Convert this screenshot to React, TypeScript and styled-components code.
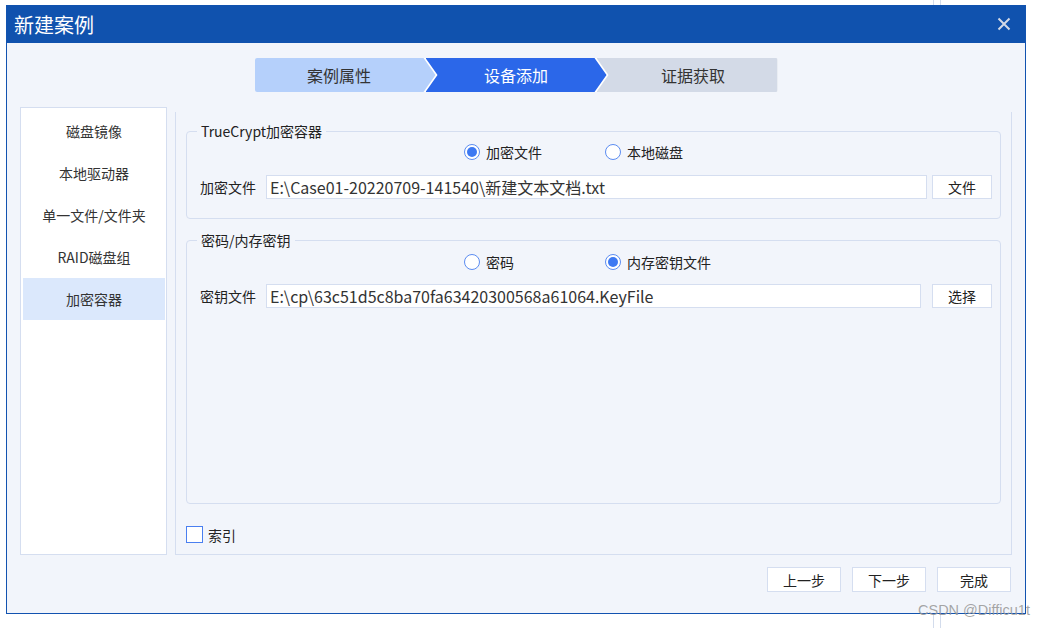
import React from 'react';
import styled, { createGlobalStyle } from 'styled-components';

const GlobalStyle = createGlobalStyle`
  html, body {
    margin: 0;
    padding: 0;
    background: #fff;
  }
  body {
    font-family: "Noto Sans CJK SC", "Noto Sans", sans-serif;
    color: #333;
    overflow: hidden;
  }
`;

const Page = styled.div`
  position: relative;
  width: 1045px;
  height: 628px;
  padding: 5px 0 0 6px;
  box-sizing: border-box;
`;

const BackLine = styled.div<{ $x: number; $top: boolean }>`
  position: absolute;
  left: ${p => p.$x}px;
  ${p => (p.$top ? 'top: 0; height: 5px;' : 'top: 614px; height: 14px;')}
  width: 1px;
  background: #d3dcec;
`;

const Window = styled.div`
  width: 1020px;
  height: 609px;
  box-sizing: border-box;
  border: 1px solid #1253b0;
  border-top: none;
  background: #f2f5fb;
  display: flex;
  flex-direction: column;
`;

const TitleBar = styled.div`
  height: 38px;
  background: #1052ae;
  display: flex;
  align-items: center;
  justify-content: space-between;
  padding: 0 14px 0 7px;
  color: #fff;
  font-size: 20px;
`;

const CloseButton = styled.button`
  border: none;
  background: none;
  padding: 0;
  width: 14px;
  height: 14px;
  display: flex;
  cursor: pointer;
`;

const Body = styled.div`
  flex: 1;
  display: flex;
  flex-direction: column;
  padding: 15px 13px 0 13px;
`;

const Steps = styled.div`
  align-self: center;
  width: 523px;
  height: 34px;
  display: flex;
  background: #fff;
  border-radius: 2px;
  overflow: hidden;
`;

type Tone = 'done' | 'active' | 'todo';

const toneBg: Record<Tone, string> = {
  done: '#b5d0fb',
  active: '#2b67e9',
  todo: '#d3dae7',
};

const Step = styled.div<{ $tone: Tone; $first?: boolean; $last?: boolean }>`
  flex: 0 0 181px;
  box-sizing: border-box;
  margin-left: ${p => (p.$first ? 0 : -10)}px;
  padding-left: ${p => (p.$first ? 0 : 12)}px;
  padding-right: ${p => (p.$last ? 0 : 12)}px;
  display: flex;
  align-items: center;
  justify-content: center;
  font-size: 16px;
  background: ${p => toneBg[p.$tone]};
  color: ${p => (p.$tone === 'active' ? '#fff' : '#333')};
  clip-path: ${p =>
    p.$first
      ? 'polygon(0 0, calc(100% - 12px) 0, 100% 50%, calc(100% - 12px) 100%, 0 100%)'
      : p.$last
      ? 'polygon(0 0, 100% 0, 100% 100%, 0 100%, 12px 50%)'
      : 'polygon(0 0, calc(100% - 12px) 0, 100% 50%, calc(100% - 12px) 100%, 0 100%, 12px 50%)'};
`;

const Main = styled.div`
  margin-top: 15px;
  height: 448px;
  display: flex;
  gap: 8px;
`;

const Sidebar = styled.div`
  width: 147px;
  box-sizing: border-box;
  background: #fff;
  border: 1px solid #d5def0;
  padding: 2px 1px 0 2px;
  display: flex;
  flex-direction: column;
`;

const NavItem = styled.div<{ $active?: boolean }>`
  height: 42px;
  display: flex;
  align-items: center;
  justify-content: center;
  font-size: 14px;
  color: #333;
  background: ${p => (p.$active ? '#dbe8fc' : 'transparent')};
`;

const Panel = styled.div`
  flex: 1;
  margin-top: 5px;
  box-sizing: border-box;
  border: 1px solid #d5def0;
  border-top: none;
  padding: 9px 10px 11px 10px;
  display: flex;
  flex-direction: column;
`;

const Group = styled.fieldset<{ $grow?: boolean; $top?: number }>`
  margin: ${p => p.$top ?? 0}px 0 0 0;
  padding: 0 8px 19px 13px;
  border: 1px solid #d5def0;
  border-radius: 4px;
  min-width: 0;
  ${p => (p.$grow ? 'flex: 1;' : '')}
`;

const Legend = styled.legend`
  margin-left: -3px;
  padding: 0 4px;
  font-size: 14px;
  line-height: 20px;
  color: #222;
`;

const RadioRow = styled.div<{ $top: number }>`
  display: flex;
  margin-top: ${p => p.$top}px;
  padding-left: 264px;
  height: 20px;
`;

const RadioItem = styled.label`
  width: 141px;
  display: flex;
  align-items: center;
  gap: 6px;
  font-size: 14px;
  color: #222;
`;

const RadioCircle = styled.span<{ $checked?: boolean }>`
  width: 16px;
  height: 16px;
  box-sizing: border-box;
  border-radius: 50%;
  border: 1px solid #5b8cf1;
  background: #fff;
  display: inline-flex;
  align-items: center;
  justify-content: center;
  &::after {
    content: '';
    width: 10px;
    height: 10px;
    border-radius: 50%;
    background: #3d79f2;
    display: ${p => (p.$checked ? 'block' : 'none')};
  }
`;

const FieldRow = styled.div<{ $top: number }>`
  display: flex;
  align-items: center;
  margin-top: ${p => p.$top}px;
`;

const FieldLabel = styled.span`
  font-size: 14px;
  color: #222;
  width: 66px;
  flex: none;
`;

const TextInput = styled.input`
  flex: 1;
  min-width: 0;
  height: 24px;
  box-sizing: border-box;
  border: 1px solid #d5def0;
  background: #fff;
  padding: 0 3px;
  font-family: "Noto Sans CJK SC", "Noto Sans", sans-serif;
  font-size: 16px;
  color: #333;
  outline: none;
`;

const Button = styled.button<{ $gap?: number }>`
  width: 60px;
  height: 24px;
  flex: none;
  margin-left: ${p => p.$gap ?? 0}px;
  box-sizing: border-box;
  border: 1px solid #d5def0;
  background: #fff;
  font-family: "Noto Sans CJK SC", "Noto Sans", sans-serif;
  font-size: 14px;
  color: #222;
  padding: 0;
  cursor: pointer;
`;

const CheckRow = styled.label`
  margin-top: 22px;
  display: flex;
  align-items: center;
  gap: 5px;
  font-size: 14px;
  color: #222;
  height: 17px;
`;

const CheckBox = styled.span`
  width: 17px;
  height: 17px;
  box-sizing: border-box;
  border: 1.5px solid #4a7ff0;
  background: #fff;
`;

const Footer = styled.div`
  margin-top: 12px;
  padding-right: 1px;
  display: flex;
  justify-content: flex-end;
  gap: 11px;
`;

const FooterButton = styled(Button)`
  width: 74px;
  height: 25px;
`;

const Watermark = styled.div`
  position: absolute;
  left: 918px;
  top: 602px;
  font-family: "Liberation Sans", Arial, sans-serif;
  font-size: 14.5px;
  color: rgba(150, 150, 150, 0.85);
  white-space: nowrap;
`;

const navItems = ['磁盘镜像', '本地驱动器', '单一文件/文件夹', 'RAID磁盘组', '加密容器'];

const App: React.FC = () => {
  const [active, setActive] = React.useState(4);

  return (
    <Page>
      <GlobalStyle />
      <BackLine $x={933} $top />
      <BackLine $x={940} $top />
      <BackLine $x={933} $top={false} />
      <BackLine $x={940} $top={false} />
      <Window>
        <TitleBar>
          <span>新建案例</span>
          <CloseButton aria-label="关闭">
            <svg width="14" height="14" viewBox="0 0 14 14">
              <path d="M1.5 1.5 L12.5 12.5 M12.5 1.5 L1.5 12.5" stroke="#d3d9e6" strokeWidth="2" />
            </svg>
          </CloseButton>
        </TitleBar>
        <Body>
          <Steps>
            <Step $tone="done" $first>案例属性</Step>
            <Step $tone="active">设备添加</Step>
            <Step $tone="todo" $last>证据获取</Step>
          </Steps>
          <Main>
            <Sidebar>
              {navItems.map((item, i) => (
                <NavItem key={item} $active={i === active} onClick={() => setActive(i)}>
                  {item}
                </NavItem>
              ))}
            </Sidebar>
            <Panel>
              <Group>
                <Legend>TrueCrypt加密容器</Legend>
                <RadioRow $top={1}>
                  <RadioItem>
                    <RadioCircle $checked />
                    加密文件
                  </RadioItem>
                  <RadioItem>
                    <RadioCircle />
                    本地磁盘
                  </RadioItem>
                </RadioRow>
                <FieldRow $top={13}>
                  <FieldLabel>加密文件</FieldLabel>
                  <TextInput readOnly defaultValue="E:\Case01-20220709-141540\新建文本文档.txt" />
                  <Button $gap={5}>文件</Button>
                </FieldRow>
              </Group>
              <Group $grow $top={11}>
                <Legend>密码/内存密钥</Legend>
                <RadioRow $top={2}>
                  <RadioItem>
                    <RadioCircle />
                    密码
                  </RadioItem>
                  <RadioItem>
                    <RadioCircle $checked />
                    内存密钥文件
                  </RadioItem>
                </RadioRow>
                <FieldRow $top={12}>
                  <FieldLabel>密钥文件</FieldLabel>
                  <TextInput readOnly defaultValue="E:\cp\63c51d5c8ba70fa63420300568a61064.KeyFile" />
                  <Button $gap={11}>选择</Button>
                </FieldRow>
              </Group>
              <CheckRow>
                <CheckBox />
                索引
              </CheckRow>
            </Panel>
          </Main>
          <Footer>
            <FooterButton>上一步</FooterButton>
            <FooterButton>下一步</FooterButton>
            <FooterButton>完成</FooterButton>
          </Footer>
        </Body>
      </Window>
      <Watermark>CSDN @Difficu1t</Watermark>
    </Page>
  );
};

export default App;
